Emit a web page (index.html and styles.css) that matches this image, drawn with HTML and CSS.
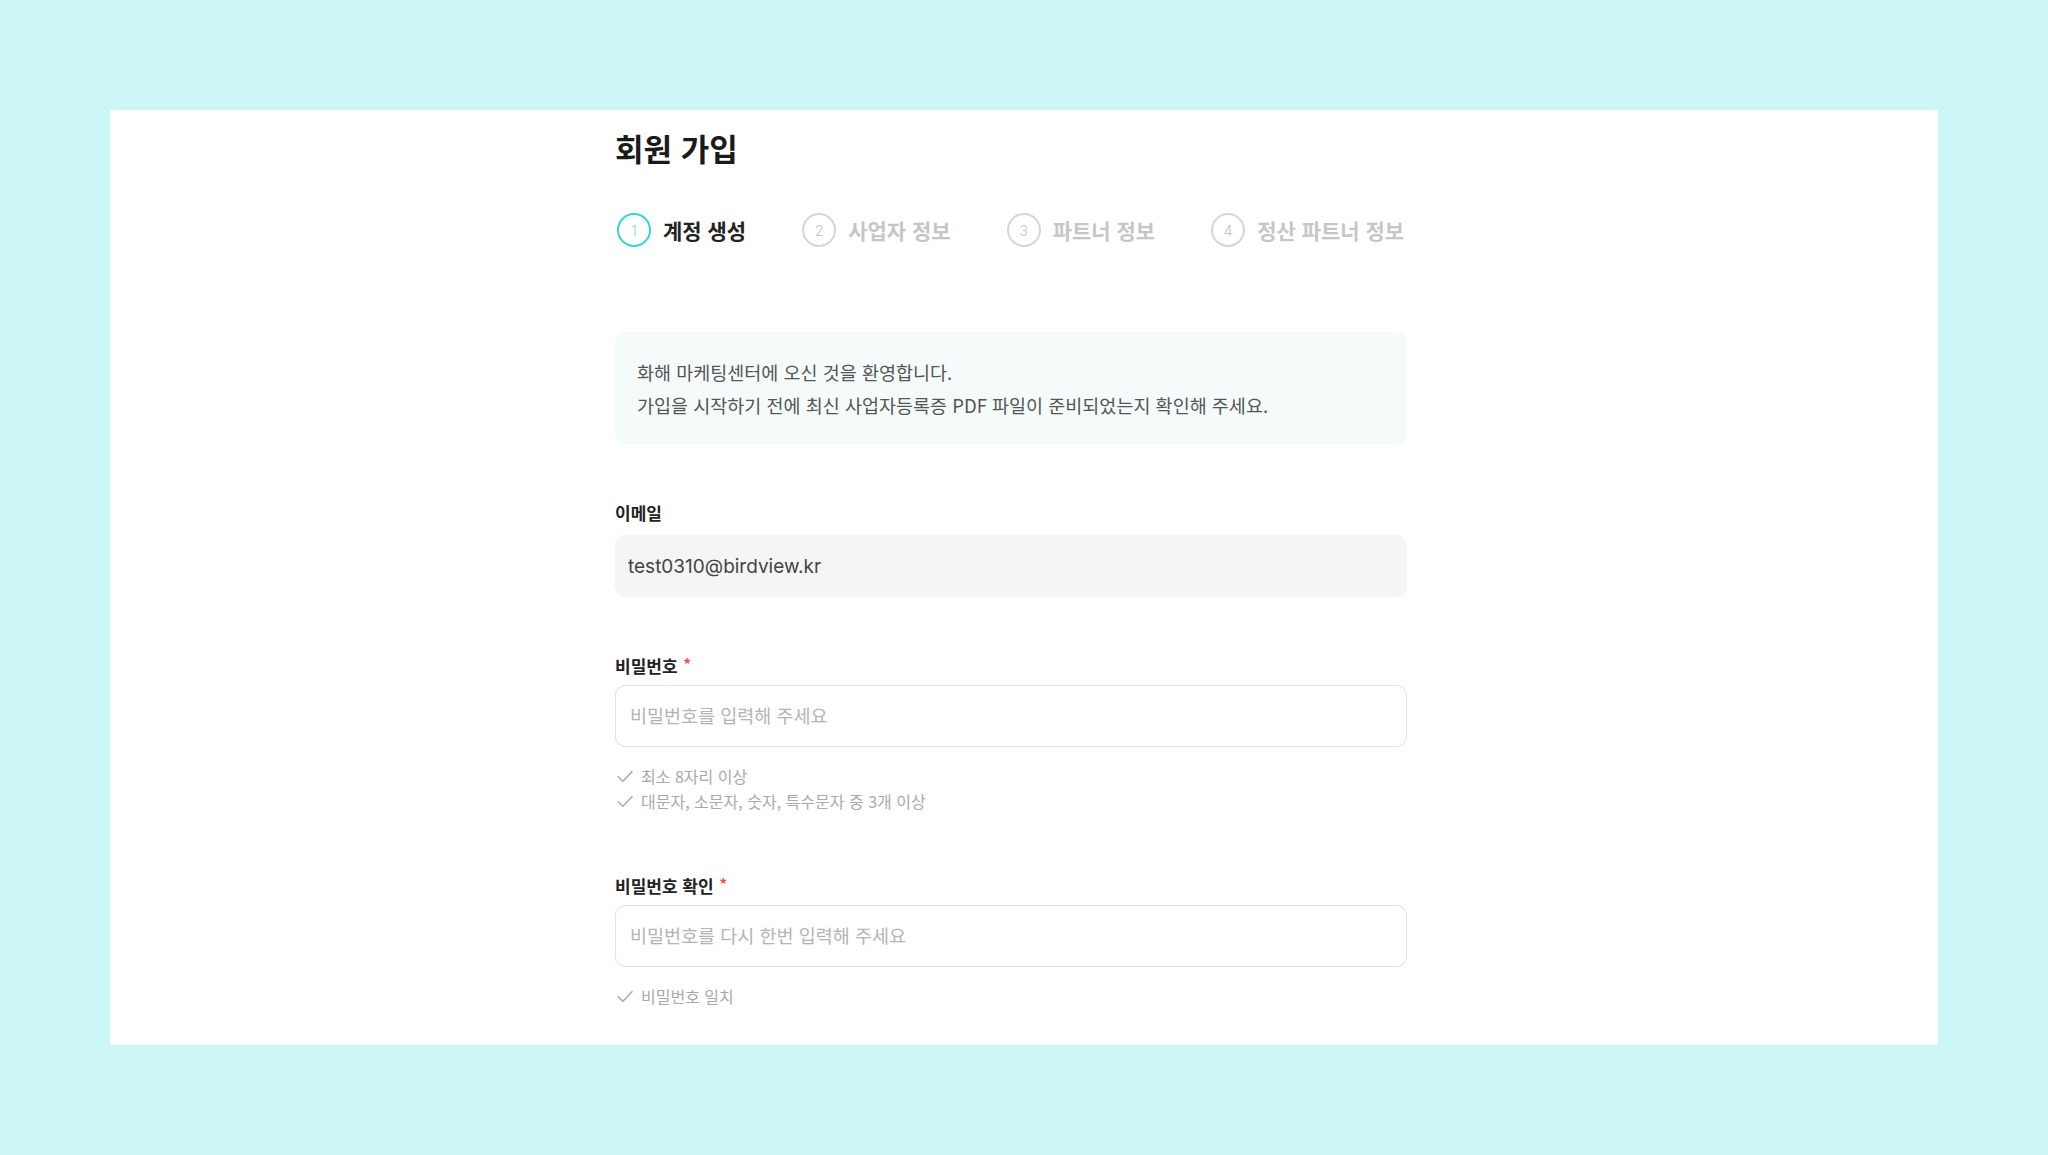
FILE: index.html
```html
<!DOCTYPE html>
<html lang="ko">
<head>
<meta charset="utf-8">
<title>회원 가입</title>
<link rel="stylesheet" href="styles.css">
</head>
<body>
<div class="panel">
  <div class="content">
    <h1 class="title">회원 가입</h1>
    <ol class="steps">
      <li class="step active"><span class="num">1</span><span class="label">계정 생성</span></li>
      <li class="step"><span class="num">2</span><span class="label">사업자 정보</span></li>
      <li class="step"><span class="num">3</span><span class="label">파트너 정보</span></li>
      <li class="step"><span class="num">4</span><span class="label">정산 파트너 정보</span></li>
    </ol>
    <div class="notice">
      <p>화해 마케팅센터에 오신 것을 환영합니다.</p>
      <p>가입을 시작하기 전에 최신 사업자등록증 PDF 파일이 준비되었는지 확인해 주세요.</p>
    </div>

    <div class="field field-email">
      <label class="field-label">이메일</label>
      <input class="input input-filled" type="text" value="test0310@birdview.kr" readonly>
    </div>

    <div class="field field-pw">
      <label class="field-label">비밀번호<span class="req">*</span></label>
      <input class="input" type="password" placeholder="비밀번호를 입력해 주세요">
      <ul class="hints">
        <li><svg class="check" viewBox="0 0 16 12"><polyline points="1.5,6 6,10.5 14.5,1.5"/></svg>최소 8자리 이상</li>
        <li><svg class="check" viewBox="0 0 16 12"><polyline points="1.5,6 6,10.5 14.5,1.5"/></svg>대문자, 소문자, 숫자, 특수문자 중 3개 이상</li>
      </ul>
    </div>

    <div class="field field-confirm">
      <label class="field-label">비밀번호 확인<span class="req">*</span></label>
      <input class="input" type="password" placeholder="비밀번호를 다시 한번 입력해 주세요">
      <ul class="hints">
        <li><svg class="check" viewBox="0 0 16 12"><polyline points="1.5,6 6,10.5 14.5,1.5"/></svg>비밀번호 일치</li>
      </ul>
    </div>
  </div>
</div>
</body>
</html>
```

FILE: styles.css
```css
* { box-sizing: border-box; }
html, body { margin: 0; padding: 0; }
body {
  background: #cdf7f6;
  font-family: Inter, "Noto Sans CJK KR", sans-serif;
  color: #222;
  padding: 110px 0 0 110px;
  height: 1155px;
  overflow: hidden;
}
.panel {
  width: 1828px;
  height: 935px;
  background: #ffffff;
  overflow: hidden;
  padding-top: 18px;
}
.content {
  margin-left: 505px;
  width: 792px;
}
.title {
  margin: 0;
  font-family: "Noto Sans CJK KR", sans-serif;
  font-size: 31px;
  line-height: 40px;
  font-weight: 700;
  color: #1a1a1a;
}
.steps {
  list-style: none;
  margin: 45px 0 0;
  padding: 0 0 0 2px;
  display: flex;
  gap: 56px;
  height: 34px;
  white-space: nowrap;
}
.step {
  display: flex;
  align-items: center;
  gap: 12px;
  flex-shrink: 0;
}
.num {
  width: 34px;
  height: 34px;
  flex-shrink: 0;
  border-radius: 50%;
  border: 2px solid #d6d6d6;
  color: #c2c2c2;
  display: flex;
  align-items: center;
  justify-content: center;
  font-family: Inter, sans-serif;
  font-size: 14px;
  font-weight: 300;
}
.step .label {
  font-family: "Noto Sans CJK KR", sans-serif;
  font-size: 21px;
  font-weight: 700;
  color: #c6c6c6;
  line-height: 34px;
}
.step.active .num {
  border-color: #36d6d0;
  color: #7fdcd8;
}
.step.active .label { color: #222; }

.notice {
  margin-top: 85px;
  background: #f5fbfb;
  border-radius: 10px;
  padding: 24px 22px 22px;
  font-family: "Noto Sans CJK KR", sans-serif;
  font-size: 18.5px;
  line-height: 33px;
  color: #555;
}
.notice p { margin: 0; }

.field { display: flex; flex-direction: column; }
.field-email { margin-top: 57px; }
.field-pw { margin-top: 57px; }
.field-confirm { margin-top: 60px; }
.field-label {
  font-family: "Noto Sans CJK KR", sans-serif;
  font-size: 17px;
  font-weight: 700;
  line-height: 24px;
  color: #222;
  margin-bottom: 7px;
}
.field-email .field-label { margin-bottom: 10px; }
.req {
  color: #ff4a55;
  font-size: 15px;
  margin-left: 6px;
  vertical-align: top;
  line-height: 20px;
}
.input {
  width: 100%;
  height: 62px;
  border: 1px solid #e2e2e2;
  border-radius: 10px;
  background: #fff;
  padding: 0 14px;
  font-family: Inter, "Noto Sans CJK KR", sans-serif;
  font-size: 19px;
  color: #444;
  outline: none;
}
.input::placeholder {
  font-family: "Noto Sans CJK KR", sans-serif;
  font-size: 18.5px;
  color: #b4b4b4;
}
.input-filled {
  background: #f5f5f5;
  border-color: #f5f5f5;
  padding-left: 12px;
}
.hints {
  list-style: none;
  margin: 17px 0 0;
  padding: 0;
}
.hints li {
  display: flex;
  align-items: center;
  gap: 7px;
  font-family: "Noto Sans CJK KR", sans-serif;
  font-size: 16px;
  line-height: 25px;
  color: #a9a9a9;
}
.check {
  width: 18px;
  height: 13px;
  margin-left: 1px;
  fill: none;
  stroke: #b0b0b0;
  stroke-width: 1.4;
  stroke-linecap: round;
  stroke-linejoin: round;
}
```
